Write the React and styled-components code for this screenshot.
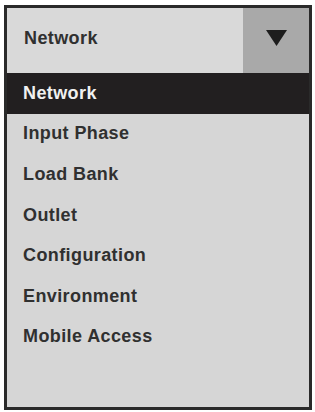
import React, { useState } from "react";
import styled, { createGlobalStyle } from "styled-components";

const items = [
  "Network",
  "Input Phase",
  "Load Bank",
  "Outlet",
  "Configuration",
  "Environment",
  "Mobile Access",
];

function App() {
  const [selected, setSelected] = useState(0);

  return (
    <>
      <GlobalStyle />
      <Frame>
        <Header>
          <Current>{items[selected]}</Current>
          <ArrowBox>
            <svg width="21" height="16" viewBox="0 0 21 16">
              <polygon points="0,0 21,0 10.5,16" fill="#1d1d1d" />
            </svg>
          </ArrowBox>
        </Header>
        <List>
          {items.map((label, i) => (
            <Item key={label} active={i === selected} onClick={() => setSelected(i)}>
              {label}
            </Item>
          ))}
        </List>
      </Frame>
    </>
  );
}

const GlobalStyle = createGlobalStyle`
  body {
    margin: 0;
    background: #fff;
    font-family: "Liberation Sans", Arial, sans-serif;
  }
`;

const Frame = styled.div`
  box-sizing: border-box;
  width: 308px;
  height: 405px;
  margin: 5px 0 0 4px;
  border: 3px solid #2a2a2a;
  background: #d6d6d6;
  display: flex;
  flex-direction: column;
`;

const Header = styled.div`
  display: flex;
  height: 65px;
  background: #d9d9d9;
`;

const Current = styled.div`
  flex: 1;
  display: flex;
  align-items: center;
  padding-left: 17px;
  padding-bottom: 5px;
  font-size: 18px;
  font-weight: bold;
  letter-spacing: 0.4px;
  color: #303030;
`;

const ArrowBox = styled.div`
  width: 66px;
  display: flex;
  align-items: center;
  justify-content: center;
  padding-bottom: 5px;
  background: #a9a9a9;
`;

const List = styled.ul`
  list-style: none;
  margin: 0;
  padding: 0;
`;

const Item = styled.li`
  height: 40.6px;
  display: flex;
  align-items: center;
  padding-left: 16px;
  font-size: 18px;
  font-weight: bold;
  letter-spacing: 0.4px;
  cursor: pointer;
  color: ${(p) => (p.active ? "#f0f0f0" : "#303030")};
  background: ${(p) => (p.active ? "#221f20" : "transparent")};
`;

export default App;
